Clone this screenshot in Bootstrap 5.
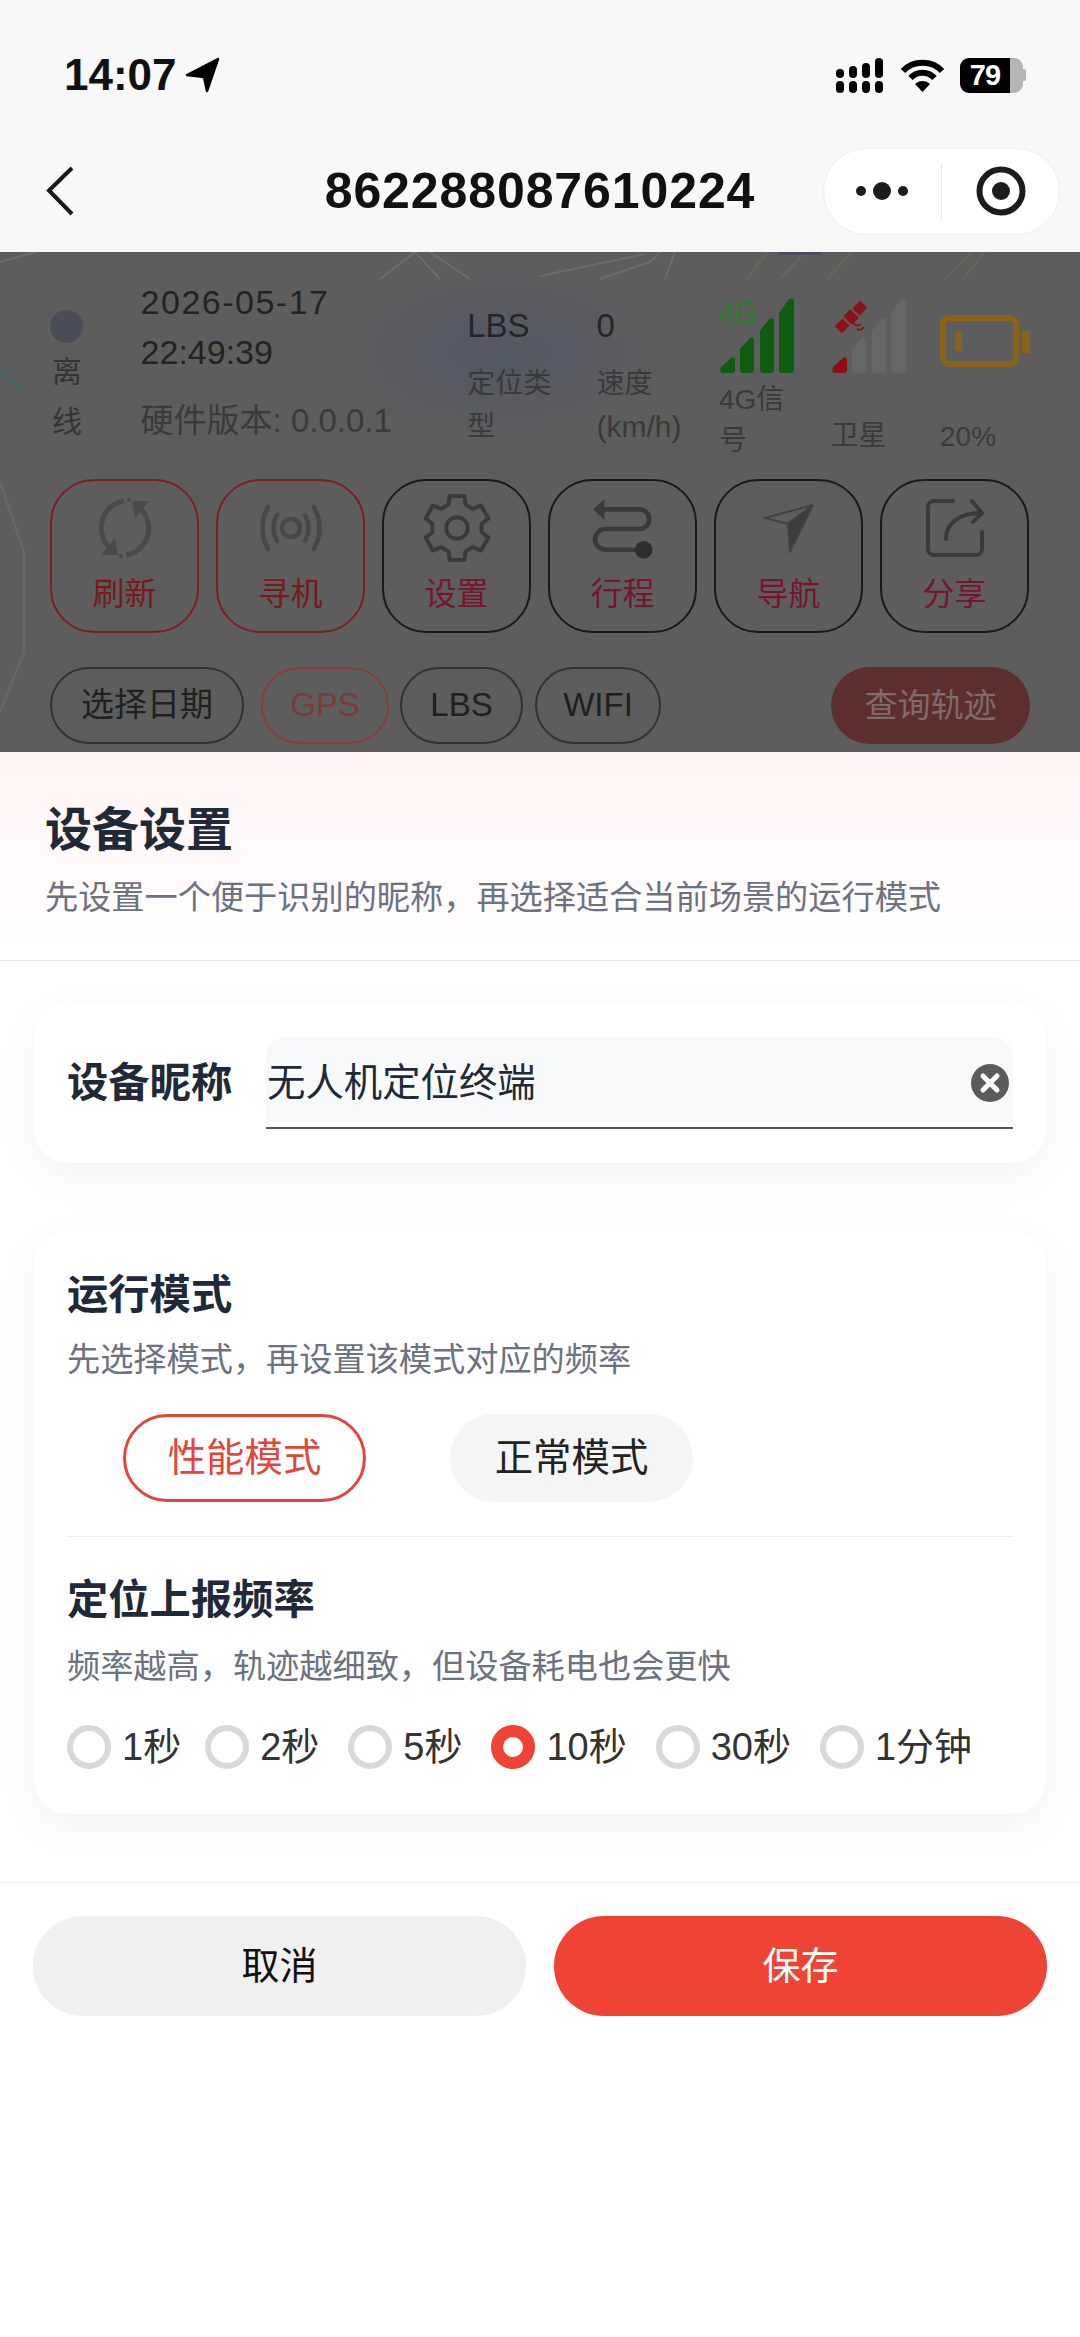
<!DOCTYPE html>
<html lang="zh-CN">
<head>
<meta charset="UTF-8">
<meta name="viewport" content="width=device-width, initial-scale=1.0">
<title>设备设置</title>
<link rel="stylesheet" href="https://cdn.jsdelivr.net/npm/bootstrap@5.3.3/dist/css/bootstrap.min.css">
<style>
    body { width: 1080px; height: 2337px; overflow: hidden; background: #fff; font-family: "Liberation Sans", "Noto Sans CJK SC", sans-serif; color: #1f2937; }

    /* top bars */
    .app-head { height: 252px; background: #f8f8f8; color: #111; }
    .status-row { height: 130px; padding: 20px 54px 0 64px; }
    .status-time { font-size: 44px; font-weight: 700; line-height: 1; }
    .batt-box { width: 66px; height: 35px; margin-left: 15px; }
    .batt-fill { width: 50px; background: #000; color: #fff; font-size: 29px; font-weight: 700; line-height: 35px; text-align: center; border-radius: 9px 0 0 9px; letter-spacing: -1px; }
    .batt-rest { width: 13px; background: #b5b5b5; border-radius: 0 9px 9px 0; }
    .batt-nub { width: 3px; height: 12px; background: #b5b5b5; border-radius: 0 2px 2px 0; }
    .nav-row { height: 122px; padding: 0 20px 0 46px; }
    .nav-title { font-size: 50px; font-weight: 700; letter-spacing: .9px; line-height: 1.2; white-space: nowrap; }
    .capsule { width: 237px; height: 87px; background: #fff; border: 1px solid #efefef; border-radius: 44px; }
    .capsule-line { width: 1px; height: 56px; background: #e8e8e8; }

    /* dimmed page behind the sheet */
    .dim-page { height: 500px; background: #5d5d5d; padding: 25px 50px 0; overflow: hidden; }
    .dim-map { position: absolute; left: 0; top: 0; width: 1080px; height: 500px; }
    .dim-row { height: 202px; }
    .col-status { width: 91px; padding-top: 33px; }
    .status-dot { width: 33px; height: 33px; background: #4a4d55; border-radius: 50%; }
    .status-text { width: 31px; margin: 4px 0 0 2px; font-size: 30px; line-height: 50px; color: #343434; }
    .col-date { width: 328px; }
    .date-line { font-size: 34px; line-height: 50px; color: #232323; }
    .date-wide { letter-spacing: 1.5px; }
    .hw-line { margin-top: 19px; font-size: 33px; line-height: 50px; color: #3a3a3a; white-space: nowrap; }
    .col-lbs { width: 130px; padding-top: 24px; }
    .col-speed { width: 123px; padding-top: 24px; }
    .val-line { font-size: 33px; line-height: 50px; color: #252525; }
    .key-line { width: 100px; margin-top: 11px; font-size: 28px; line-height: 43px; color: #3a3a3a; }
    .key-unit { font-size: 30px; }
    .col-signal { width: 112px; padding-top: 20px; }
    .col-sat { width: 110px; padding-top: 20px; }
    .col-batt { padding-top: 38px; }
    .icon-label { font-size: 28px; line-height: 41px; color: #3a3a3a; }
    .label-narrow { width: 90px; }
    .label-low { margin-top: 40px; }
    .label-batt { margin-top: 49px; }
    .tile-row { gap: 17px; }
    .tile { width: 149px; height: 154px; padding-top: 12px; border: 2.5px solid #1a1a1a; border-radius: 44px; }
    .tile-on { border-color: #7b1f22; }
    .tile-icon { height: 70px; }
    .tile-text { margin-top: 10px; font-size: 32px; line-height: 42px; color: #761530; }
    .tile-on .tile-text { color: #761a1c; }
    .chip-row { margin-top: 34px; height: 77px; }
    .chip { height: 77px; border: 2.5px solid #333; border-radius: 39px; font-size: 33px; line-height: 72px; color: #202020; text-align: center; }
    .chip-date { width: 194px; margin-right: 17px; }
    .chip-gps { width: 128px; margin-right: 11px; border-color: #8a3c3c; color: #7c3a3a; }
    .chip-lbs { width: 123px; margin-right: 12px; }
    .chip-wifi { width: 126px; }
    .chip-query { width: 199px; height: 77px; background: #5c2f2e; border-radius: 39px; font-size: 33px; line-height: 77px; color: #7f6b69; text-align: center; }

    /* bottom sheet */
    .sheet-head { height: 209px; padding: 48px 45px 0; background: linear-gradient(#fff4f4, #fff); border-bottom: 1px solid #e9e9eb; }
    .sheet-title { font-size: 47px; font-weight: 700; line-height: 60px; color: #1f2937; }
    .sheet-sub { margin-top: 16px; font-size: 33.2px; line-height: 44px; color: #6b7280; white-space: nowrap; }
    .set-card { margin: 0 34px; border: 0; border-radius: 34px; background: #fff; box-shadow: 0 12px 40px rgba(30, 40, 70, .06); }
    .name-card { height: 160px; margin-top: 42px; padding: 34px 33px 0; }
    .name-label { width: 199px; font-size: 41.3px; font-weight: 700; line-height: 92px; color: #1f2937; }
    .name-field { height: 92px; padding-bottom: 6px; border-bottom: 2px solid #555; }
    .name-input { height: 85px; padding: 6px 3px 0 1px; background: #f8f9fb; border-radius: 20px 20px 0 0; font-size: 38.4px; color: #1f2937; }
    .mode-card { height: 583px; margin-top: 68px; padding: 36px 33px 0; }
    .block-title { font-size: 41.3px; font-weight: 700; line-height: 56px; color: #1f2937; }
    .block-sub { margin-top: 15px; font-size: 33.2px; line-height: 44px; color: #6b7280; }
    .block-sub-low { margin-top: 17px; }
    .mode-row { margin-top: 32px; padding-left: 56px; gap: 84px; }
    .mode-btn { width: 243px; height: 88px; padding: 0; border-radius: 44px; font-size: 38.4px; line-height: 1; }
    .mode-on { border: 3px solid #e5453a; color: #e5453a; background: #fff; }
    .mode-off { border: 0; color: #222; background: #f5f5f5; }
    .mode-rule { margin: 34px 0 35px; height: 1px; background: #eceef1; }
    .rate-row { margin-top: 36px; }
    .rate-item { height: 44px; margin-right: 29px; font-size: 38px; line-height: 44px; color: #333; }
    .rate-item:first-child { margin-right: 24px; }
    .rate-radio.form-check-input { width: 44px; height: 44px; margin: 0 11px 0 0; border: 6px solid #d9d9d9; background-color: #fff; }
    .rate-radio.form-check-input:checked[type=radio] { border: 12px solid #ee4335; background-color: #fff; background-image: none; }
    .sheet-foot { margin-top: 68px; padding: 33px 33px 0; border-top: 1px solid #f1f1f1; gap: 28px; }
    .foot-btn { height: 100px; padding: 0; border: 0; border-radius: 50px; font-size: 38px; line-height: 1; }
    .foot-cancel { background: #f0f0f0; color: #111; }
    .foot-save { background: #ee4335; color: #fff; }
</style>
</head>
<body>

<div class="app-head">
    <div class="status-row d-flex align-items-center justify-content-between">
        <div class="d-flex align-items-center">
            <span class="status-time">14:07</span>
            <svg class="ms-2" width="36" height="36" viewBox="0 0 36 36"><path d="M33 2 2 18l17 2 3 14Z" fill="#000" stroke="#000" stroke-width="2.5" stroke-linejoin="round"/></svg>
        </div>
        <div class="d-flex align-items-center">
            <svg width="48" height="35" viewBox="0 0 48 35" fill="#000">
                <rect x="0" y="11" width="8" height="9" rx="4"/><rect x="13" y="8" width="8" height="12" rx="4"/><rect x="26" y="5" width="8" height="15" rx="4"/><rect x="39" y="0" width="8" height="20" rx="4"/>
                <rect x="0" y="23" width="8" height="12" rx="4"/><rect x="13" y="23" width="8" height="12" rx="4"/><rect x="26" y="23" width="8" height="12" rx="4"/><rect x="39" y="23" width="8" height="12" rx="4"/>
            </svg>
            <svg class="ms-3" width="45" height="33" viewBox="0 0 45 33" fill="none" stroke="#000" stroke-width="6">
                <path d="M3 12C13 1 32 1 42 12"/><path d="M10.500 19C17 12 28 12 34.500 19"/><path d="M22.500 33 15 25C19 21 26 21 30 25Z" fill="#000" stroke="none"/>
            </svg>
            <div class="d-flex align-items-center batt-box">
                <div class="batt-fill">79</div>
                <div class="batt-rest align-self-stretch"></div>
                <div class="batt-nub"></div>
            </div>
        </div>
    </div>
    <div class="nav-row d-flex align-items-center justify-content-between position-relative">
        <svg width="30" height="50" viewBox="0 0 30 50" fill="none" stroke="#1a1a1a" stroke-width="4"><path d="M26 2 3 24.500 26 48"/></svg>
        <span class="nav-title position-absolute start-50 translate-middle-x">862288087610224</span>
        <div class="capsule d-flex align-items-center justify-content-around px-3">
            <svg width="52" height="20" viewBox="0 0 52 20" fill="#1c1c1c"><circle cx="5" cy="10" r="5"/><circle cx="26" cy="10" r="9"/><circle cx="47" cy="10" r="5"/></svg>
            <div class="capsule-line"></div>
            <svg width="52" height="52" viewBox="0 0 52 52"><circle cx="26" cy="26" r="21.500" fill="none" stroke="#1c1c1c" stroke-width="6"/><circle cx="26" cy="26" r="9" fill="#1c1c1c"/></svg>
        </div>
    </div>
</div>

<div class="dim-page position-relative">
    <svg class="dim-map" viewBox="0 0 1080 500" fill="none" stroke="#6c6c6c" stroke-width="2">
        <defs><radialGradient id="blueTint"><stop offset="0" stop-color="#525863"/><stop offset="1" stop-color="#525863" stop-opacity="0"/></radialGradient></defs>
        <ellipse cx="500" cy="100" rx="170" ry="90" fill="url(#blueTint)" stroke="none"/>
        <path d="M0 10 36 0M540 24 645 2M600 27 650 10 660 0M665 27 675 0M380 27 415 0 440 27M430 0 470 27"/>
        <path d="M747 27 767 0M780 27 805 0M827 27 852 0M945 27 972 0M963 27 985 0" stroke="#6a6657"/>
        <path d="M778 1H822" stroke="#454b63" stroke-width="3"/>
        <path d="M0 118 26 141" stroke="#3e6a68" stroke-width="2.500"/>
        <path d="M0 230 24 300 24 400 0 460" stroke="#666" stroke-width="3"/>
    </svg>

    <div class="dim-row d-flex position-relative">
        <div class="col-status">
            <div class="status-dot"></div>
            <div class="status-text">离线</div>
        </div>
        <div class="col-date">
            <div class="date-line date-wide">2026-05-17</div>
            <div class="date-line">22:49:39</div>
            <div class="hw-line">硬件版本: 0.0.0.1</div>
        </div>
        <div class="col-lbs">
            <div class="val-line">LBS</div>
            <div class="key-line">定位类型</div>
        </div>
        <div class="col-speed">
            <div class="val-line">0</div>
            <div class="key-line">速度 <span class="key-unit">(km/h)</span></div>
        </div>
        <div class="col-signal">
            <svg class="d-block" width="78" height="78" viewBox="0 0 78 78" fill="#0f5c12">
                <text x="0" y="28" font-size="35" fill="#2f7a2f" textLength="38" lengthAdjust="spacingAndGlyphs" font-family="Liberation Sans">4G</text>
                <path d="M2 70 12 61Q16 59 16 63V73Q16 76 13 76H4Q0 76 2 70Z"/>
                <path d="M21 52 31 41Q35 39 35 43V73Q35 76 32 76H24Q21 76 21 73Z"/>
                <path d="M41 34 50 22Q55 20 55 24V73Q55 76 52 76H44Q41 76 41 73Z"/>
                <path d="M60 16 70 2Q75 0 75 5V73Q75 76 72 76H63Q60 76 60 73Z"/>
            </svg>
            <div class="icon-label label-narrow mt-1">4G信号</div>
        </div>
        <div class="col-sat">
            <svg class="d-block" width="78" height="78" viewBox="0 0 78 78" fill="#666">
                <path d="M21 52 31 41Q35 39 35 43V73Q35 76 32 76H24Q21 76 21 73Z"/>
                <path d="M41 34 50 22Q55 20 55 24V73Q55 76 52 76H44Q41 76 41 73Z"/>
                <path d="M60 16 70 2Q75 0 75 5V73Q75 76 72 76H63Q60 76 60 73Z"/>
                <path d="M2 70 12 61Q16 59 16 63V73Q16 76 13 76H4Q0 76 2 70Z" fill="#8e0f17"/>
                <g fill="#8e0f17" transform="translate(20 20) rotate(-45)">
                    <rect x="-18" y="-5" width="11" height="10"/>
                    <rect x="-5" y="-6" width="10" height="12"/>
                    <rect x="7" y="-5" width="11" height="10"/>
                </g>
                <path d="M21 24Q25 31 30 27M26 32Q30 34 33 30" fill="none" stroke="#8e0f17" stroke-width="2"/>
            </svg>
            <div class="icon-label label-low">卫星</div>
        </div>
        <div class="col-batt">
            <svg class="d-block" width="90" height="52" viewBox="0 0 90 52" fill="none">
                <rect x="3" y="3" width="73" height="46" rx="6" stroke="#8a6318" stroke-width="6"/>
                <rect x="15" y="16" width="7" height="20" rx="2" fill="#8a6318"/>
                <rect x="82" y="16" width="8" height="22" rx="1" fill="#8a6318"/>
            </svg>
            <div class="icon-label label-batt">20%</div>
        </div>
    </div>

    <div class="tile-row d-flex position-relative">
        <div class="tile tile-on text-center">
            <div class="tile-icon d-flex align-items-center justify-content-center">
                <svg width="62" height="62" viewBox="0 0 62 62" fill="none" stroke="#4a4a4a" stroke-width="5">
                    <path d="M30 4C14 6 3 24 9 40 10 44 12 47 16 51"/>
                    <path d="M32 58C48 56 59 38 53 22 52 18 50 15 46 11"/>
                    <path d="M24 58H7L21 41ZM38 4H55L41 21Z" fill="#4a4a4a" stroke="none"/>
                    <circle cx="35" cy="3" r="2" fill="#4a4a4a" stroke="none"/><circle cx="27" cy="59" r="2" fill="#4a4a4a" stroke="none"/>
                </svg>
            </div>
            <div class="tile-text">刷新</div>
        </div>
        <div class="tile tile-on text-center">
            <div class="tile-icon d-flex align-items-center justify-content-center">
                <svg width="62" height="48" viewBox="0 0 62 48" fill="none" stroke="#484848" stroke-width="4.500" stroke-linecap="round">
                    <circle cx="31" cy="24" r="9"/>
                    <path d="M17 11Q10 24 17 37M45 11Q52 24 45 37"/>
                    <path d="M8 3Q-3 24 8 45M54 3Q65 24 54 45"/>
                </svg>
            </div>
            <div class="tile-text">寻机</div>
        </div>
        <div class="tile text-center">
            <div class="tile-icon d-flex align-items-center justify-content-center">
                <svg width="68" height="68" viewBox="0 0 60 60" fill="none" stroke="#3a3a3a" stroke-width="3.500" stroke-linejoin="round">
                    <path d="M22.500 9.300 23.500 1.700H36.500L37.500 9.300 44.100 13.100 51.200 10.200 57.700 21.500 51.700 26.200V33.800L57.700 38.500 51.200 49.800 44.100 46.900 37.500 50.700 36.500 58.300H23.500L22.500 50.700 15.900 46.900 8.800 49.800 2.300 38.500 8.300 33.800V26.200L2.300 21.500 8.800 10.200 15.900 13.100Z"/>
                    <circle cx="30" cy="30" r="9.500"/>
                </svg>
            </div>
            <div class="tile-text">设置</div>
        </div>
        <div class="tile text-center">
            <div class="tile-icon d-flex align-items-center justify-content-center">
                <svg width="62" height="62" viewBox="0 0 60 60" fill="none" stroke="#3a3a3a" stroke-width="4.500">
                    <path d="M10 12H46A9.500 9.500 0 0 1 46 31H13A10 10 0 0 0 13 51H50"/>
                    <path d="M1 12 12 2V22Z" fill="#3a3a3a" stroke="none"/>
                    <circle cx="50" cy="51" r="8.500" fill="#2e2e2e" stroke="none"/>
                </svg>
            </div>
            <div class="tile-text">行程</div>
        </div>
        <div class="tile text-center">
            <div class="tile-icon d-flex align-items-center justify-content-center">
                <svg width="52" height="50" viewBox="0 0 52 50" fill="none" stroke="#414141" stroke-width="2">
                    <path d="M50 2 2 15 25 21Z"/>
                    <path d="M50 2 25 21 27 48Z" fill="#3c3c3c"/>
                </svg>
            </div>
            <div class="tile-text">导航</div>
        </div>
        <div class="tile text-center">
            <div class="tile-icon d-flex align-items-center justify-content-center">
                <svg width="60" height="60" viewBox="0 0 60 60" fill="none" stroke="#3a3a3a" stroke-width="4" stroke-linecap="round" stroke-linejoin="round">
                    <path d="M28 3H9A6 6 0 0 0 3 9V51A6 6 0 0 0 9 57H51A6 6 0 0 0 57 51V34"/>
                    <path d="M21 41C21 26 33 15 56 15M47 3 57 15 48 24"/>
                </svg>
            </div>
            <div class="tile-text">分享</div>
        </div>
    </div>

    <div class="chip-row d-flex position-relative">
        <div class="chip chip-date">选择日期</div>
        <div class="chip chip-gps">GPS</div>
        <div class="chip chip-lbs">LBS</div>
        <div class="chip chip-wifi">WIFI</div>
        <div class="chip-query ms-auto">查询轨迹</div>
    </div>
</div>

<div class="sheet-head">
    <div class="sheet-title">设备设置</div>
    <div class="sheet-sub">先设置一个便于识别的昵称，再选择适合当前场景的运行模式</div>
</div>

<div class="card set-card name-card">
    <div class="d-flex">
        <div class="name-label">设备昵称</div>
        <div class="name-field flex-grow-1">
            <div class="name-input d-flex align-items-center justify-content-between">
                <span>无人机定位终端</span>
                <svg width="40" height="40" viewBox="0 0 40 40"><circle cx="20" cy="20" r="19" fill="#5b5b5b"/><path d="M13 13 27 27M27 13 13 27" stroke="#fff" stroke-width="5" stroke-linecap="round"/></svg>
            </div>
        </div>
    </div>
</div>

<div class="card set-card mode-card">
    <div class="block-title">运行模式</div>
    <div class="block-sub">先选择模式，再设置该模式对应的频率</div>
    <div class="mode-row d-flex">
        <button class="btn mode-btn mode-on" type="button">性能模式</button>
        <button class="btn mode-btn mode-off" type="button">正常模式</button>
    </div>
    <div class="mode-rule"></div>
    <div class="block-title">定位上报频率</div>
    <div class="block-sub block-sub-low">频率越高，轨迹越细致，但设备耗电也会更快</div>
    <div class="rate-row d-flex">
        <label class="rate-item d-flex"><input class="form-check-input rate-radio" type="radio" name="rate">1秒</label>
        <label class="rate-item d-flex"><input class="form-check-input rate-radio" type="radio" name="rate">2秒</label>
        <label class="rate-item d-flex"><input class="form-check-input rate-radio" type="radio" name="rate">5秒</label>
        <label class="rate-item d-flex"><input class="form-check-input rate-radio" type="radio" name="rate" checked>10秒</label>
        <label class="rate-item d-flex"><input class="form-check-input rate-radio" type="radio" name="rate">30秒</label>
        <label class="rate-item d-flex"><input class="form-check-input rate-radio" type="radio" name="rate">1分钟</label>
    </div>
</div>

<div class="sheet-foot d-flex">
    <button class="btn foot-btn foot-cancel flex-fill w-50" type="button">取消</button>
    <button class="btn foot-btn foot-save flex-fill w-50" type="button">保存</button>
</div>

<script src="https://cdn.jsdelivr.net/npm/bootstrap@5.3.3/dist/js/bootstrap.bundle.min.js"></script>
</body>
</html>
